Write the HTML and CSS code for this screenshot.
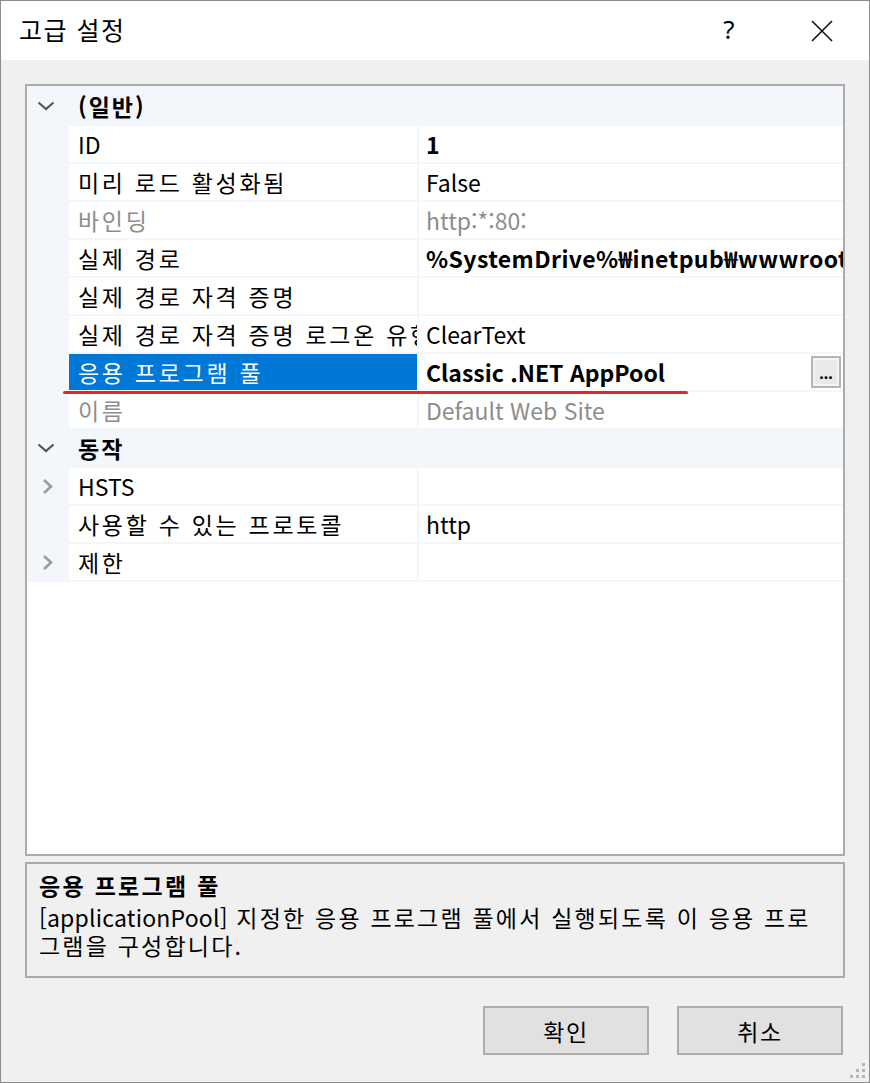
FILE: index.html
```html
<!DOCTYPE html>
<html lang="ko">
<head>
<meta charset="utf-8">
<title>고급 설정</title>
<link rel="stylesheet" href="styles.css">
</head>
<body>
<div class="window">
  <div class="titlebar">
    <span class="title">고급 설정</span>
    <span class="help">?</span>
    <span class="close">
      <svg width="22" height="22" viewBox="0 0 22 22"><path d="M1 1 L21 21 M21 1 L1 21" stroke="#111" stroke-width="1.6" fill="none"/></svg>
    </span>
  </div>
  <div class="body">
    <div class="grid">
      <div class="rows">
        <div class="cat">
          <span class="exp"><svg width="18" height="10" viewBox="0 0 18 10"><path d="M1.5 1.5 L9 8 L16.5 1.5" stroke="#555" stroke-width="2.2" fill="none"/></svg></span>
          <span class="cat-name">(일반)</span>
        </div>
        <div class="row"><span class="exp"></span><span class="name latin">ID</span><span class="val bold">1</span></div>
        <div class="row"><span class="exp"></span><span class="name">미리 로드 활성화됨</span><span class="val">False</span></div>
        <div class="row"><span class="exp"></span><span class="name dim">바인딩</span><span class="val dim">http:*:80:</span></div>
        <div class="row"><span class="exp"></span><span class="name">실제 경로</span><span class="val bold path">%SystemDrive%₩inetpub₩wwwroot</span></div>
        <div class="row"><span class="exp"></span><span class="name">실제 경로 자격 증명</span><span class="val"></span></div>
        <div class="row"><span class="exp"></span><span class="name">실제 경로 자격 증명 로그온 유형</span><span class="val">ClearText</span></div>
        <div class="row selected"><span class="exp"></span><span class="name">응용 프로그램 풀</span><span class="val bold">Classic .NET AppPool<span class="more">...</span></span></div>
        <div class="row"><span class="exp"></span><span class="name dim">이름</span><span class="val dim">Default Web Site</span></div>
        <div class="cat">
          <span class="exp"><svg width="18" height="10" viewBox="0 0 18 10"><path d="M1.5 1.5 L9 8 L16.5 1.5" stroke="#555" stroke-width="2.2" fill="none"/></svg></span>
          <span class="cat-name">동작</span>
        </div>
        <div class="row"><span class="exp"><svg width="11" height="17" viewBox="0 0 11 17"><path d="M2 2 L9 8.5 L2 15" stroke="#9c9c9c" stroke-width="2.6" fill="none"/></svg></span><span class="name latin">HSTS</span><span class="val"></span></div>
        <div class="row"><span class="exp"></span><span class="name">사용할 수 있는 프로토콜</span><span class="val">http</span></div>
        <div class="row"><span class="exp"><svg width="11" height="17" viewBox="0 0 11 17"><path d="M2 2 L9 8.5 L2 15" stroke="#9c9c9c" stroke-width="2.6" fill="none"/></svg></span><span class="name">제한</span><span class="val"></span></div>
      </div>
    </div>
    <div class="desc">
      <div class="desc-title">응용 프로그램 풀</div>
      <div class="desc-text"><span class="latin">[applicationPool]</span> 지정한 응용 프로그램 풀에서 실행되도록 이 응용 프로<br>그램을 구성합니다.</div>
    </div>
    <div class="buttons">
      <button class="btn">확인</button>
      <button class="btn">취소</button>
    </div>
    <div class="grip">
      <svg width="18" height="18" viewBox="0 0 18 18" fill="#b5b5b5">
        <rect x="13" y="1" width="3" height="3"/>
        <rect x="7" y="7" width="3" height="3"/><rect x="13" y="7" width="3" height="3"/>
        <rect x="1" y="13" width="3" height="3"/><rect x="7" y="13" width="3" height="3"/><rect x="13" y="13" width="3" height="3"/>
      </svg>
    </div>
  </div>
  <div class="annot-line"></div>
</div>
</body>
</html>
```

FILE: styles.css
```css
* { box-sizing: border-box; }
html, body { margin: 0; padding: 0; }
body {
  font-family: "Noto Sans CJK KR", "Noto Sans", sans-serif;
  color: #000;
  background: #f0f0f0;
}
.window {
  position: relative;
  width: 870px;
  height: 1083px;
  border: 1px solid #8c8c8c;
  background: #f0f0f0;
  display: flex;
  flex-direction: column;
}
.titlebar {
  height: 59px;
  background: #fff;
  display: flex;
  align-items: center;
  padding-left: 18px;
  flex: none;
}
.title {
  font-size: 25px;
  letter-spacing: 1.5px;
  flex: 1;
  margin-top: -4px;
}
.help {
  font-size: 26px;
  font-family: "Noto Sans", sans-serif;
  width: 28px;
  margin-right: 68px;
  text-align: center;
  margin-top: -3px;
}
.close {
  width: 22px;
  height: 22px;
  margin-right: 36px;
  display: flex;
}
.body {
  position: relative;
  flex: 1;
  padding: 24px 24px 0 24px;
  display: flex;
  flex-direction: column;
}
.grid {
  width: 820px;
  height: 772px;
  border: 2px solid #ababab;
  background: #fff;
  flex: none;
}
.rows {
  background: #f3f6fb;
  display: flex;
  flex-direction: column;
  gap: 2px;
  padding-top: 2px;
  padding-bottom: 2px;
}
.row, .cat {
  display: flex;
  height: 36px;
  font-size: 23px;
  line-height: 36px;
}
.exp {
  width: 42px;
  flex: none;
  display: flex;
  align-items: center;
}
.cat .exp { padding-left: 10px; }
.row .exp { padding-left: 15px; }
.cat-name {
  font-weight: 700;
  padding-left: 9px;
  letter-spacing: 2px;
}
.name {
  width: 348px;
  flex: none;
  background: #fff;
  padding-left: 9px;
  white-space: nowrap;
  overflow: hidden;
  margin-right: 2px;
  letter-spacing: 2.7px;
}
.name.latin { letter-spacing: 0; }
.val {
  flex: 1;
  background: #fff;
  padding-left: 7px;
  white-space: nowrap;
  overflow: hidden;
  display: flex;
  align-items: center;
}
.val.path { letter-spacing: 0.4px; }
.bold { font-weight: 700; }
.dim { color: #8d8d8d; }
.selected .name {
  background: #0078d7;
  color: #fff;
}
.more {
  margin-left: auto;
  margin-right: 2px;
  flex: none;
  width: 30px;
  height: 32px;
  border: 2px solid #b4b4b4;
  background: #e9e9e9;
  box-shadow: inset 0 0 0 2px #f4f4f4;
  font-size: 16px;
  font-weight: 700;
  line-height: 30px;
  text-align: center;
  font-family: "Noto Sans", sans-serif;
}
.desc {
  margin-top: 6px;
  width: 820px;
  height: 116px;
  border: 2px solid #ababab;
  padding: 3px 0 0 12px;
  font-size: 23px;
  flex: none;
}
.desc-title {
  font-weight: 700;
  line-height: 36px;
  letter-spacing: 2.3px;
}
.desc-text {
  line-height: 28px;
  letter-spacing: 2.2px;
  white-space: nowrap;
}
.desc-text .latin { letter-spacing: 0.2px; }
.buttons {
  display: flex;
  justify-content: flex-end;
  gap: 28px;
  margin-top: 28px;
  padding-right: 2px;
}
.btn {
  width: 166px;
  height: 49px;
  border: 2px solid #adadad;
  background: #e1e1e1;
  font-family: "Noto Sans CJK KR", sans-serif;
  font-size: 23px;
  letter-spacing: 1.5px;
  color: #000;
  padding: 0;
}
.grip {
  position: absolute;
  right: 2px;
  bottom: 3px;
  width: 18px;
  height: 18px;
}
.annot-line {
  position: absolute;
  left: 62px;
  top: 390px;
  width: 625px;
  height: 3px;
  background: #e0262b;
  border-radius: 1.5px;
}
```
